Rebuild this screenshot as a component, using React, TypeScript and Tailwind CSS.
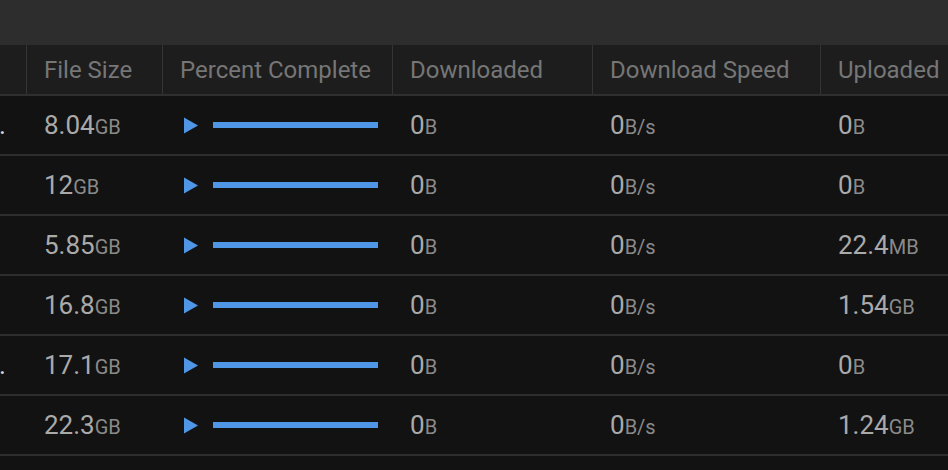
import React from "react";

type Row = {
  dot: boolean;
  size: [string, string];
  up: [string, string];
};

const rows: Row[] = [
  { dot: true, size: ["8.04", "GB"], up: ["0", "B"] },
  { dot: false, size: ["12", "GB"], up: ["0", "B"] },
  { dot: false, size: ["5.85", "GB"], up: ["22.4", "MB"] },
  { dot: false, size: ["16.8", "GB"], up: ["1.54", "GB"] },
  { dot: true, size: ["17.1", "GB"], up: ["0", "B"] },
  { dot: false, size: ["22.3", "GB"], up: ["1.24", "GB"] },
];

function Val({ n, u }: { n: string; u: string }) {
  return (
    <span className="whitespace-nowrap">
      <span className="text-[26px] text-[#aaaaaa]">{n}</span>
      <span className="text-[20px] text-[#8a8a8a]">{u}</span>
    </span>
  );
}

const cols = "grid grid-cols-[27px_136px_230px_200px_228px_1fr]";

export default function App() {
  return (
    <div
      className="w-[948px] h-[470px] overflow-hidden bg-[#121212]"
      style={{ fontFamily: "Roboto, 'Noto Sans', sans-serif" }}
    >
      <div className="h-[45px] bg-[#2d2d2d]" />
      <div className={`${cols} h-[51px] bg-[#1d1d1d] border-b-2 border-[#2f2f2f] text-[24px] text-[#767676]`}>
        {["", "File Size", "Percent Complete", "Downloaded", "Download Speed", "Uploaded"].map((h, i) => (
          <div
            key={i}
            className={`flex items-center pl-[17px] whitespace-nowrap overflow-hidden ${i < 5 ? "border-r-[1.5px] border-[#353535]" : ""}`}
          >
            {h}
          </div>
        ))}
      </div>
      {rows.map((r, i) => (
        <div key={i} className={`${cols} h-[60px] border-b-2 border-[#2e2e2e] bg-[#121212]`}>
          <div className="flex items-center">
            {r.dot && <span className="text-[26px] text-[#d8d8d8] leading-none -ml-[1px]">.</span>}
          </div>
          <div className="flex items-center pl-[17px]">
            <Val n={r.size[0]} u={r.size[1]} />
          </div>
          <div className="flex items-center pl-[21px]">
            <svg width="14" height="17" viewBox="0 0 14 17" className="shrink-0 block">
              <polygon points="0,0.5 14,8.5 0,16.5" fill="#4f96e6" />
            </svg>
            <div className="ml-[15px] w-[165px] h-[6px] bg-[#4f96e6]" />
          </div>
          <div className="flex items-center pl-[17px]">
            <Val n="0" u="B" />
          </div>
          <div className="flex items-center pl-[17px]">
            <Val n="0" u="B/s" />
          </div>
          <div className="flex items-center pl-[17px]">
            <Val n={r.up[0]} u={r.up[1]} />
          </div>
        </div>
      ))}
    </div>
  );
}
